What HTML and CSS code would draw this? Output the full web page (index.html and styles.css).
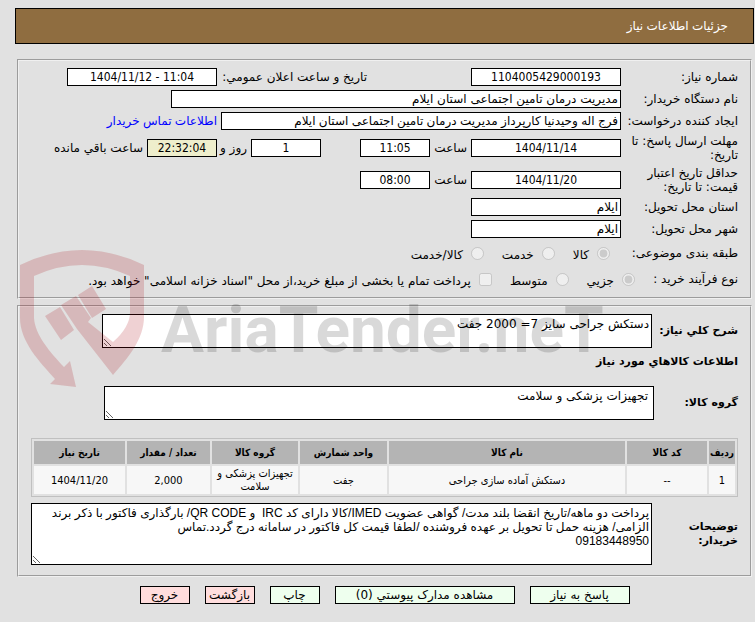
FILE: index.html
```html
<!DOCTYPE html>
<html lang="fa" dir="rtl">
<head>
    <meta charset="UTF-8">
    <meta name="viewport" content="width=device-width, initial-scale=1.0">
    <title>جزئیات اطلاعات نیاز</title>
    <link rel="stylesheet" href="styles.css">
</head>
<body>
    <header class="page-title">جزئیات اطلاعات نیاز</header>

    <main>
        <section class="panel">
            <div class="row">
                <label class="caption" for="needNo">شماره نیاز:</label>
                <input class="num medium" type="text" id="needNo" value="1104005429000193" readonly>
                <label class="announce" for="announceDate">تاریخ و ساعت اعلان عمومي:</label>
                <input class="num medium" type="text" id="announceDate" value="1404/11/12 - 11:04" dir="ltr" readonly>
            </div>
            <div class="row">
                <label class="caption" for="buyer">نام دستگاه خریدار:</label>
                <input class="wide" type="text" id="buyer" value="مدیریت درمان تامین اجتماعی استان ایلام" readonly>
            </div>
            <div class="row">
                <label class="caption" for="creator">ایجاد کننده درخواست:</label>
                <input class="creator" type="text" id="creator" value="فرج اله وحیدنیا کارپرداز مدیریت درمان تامین اجتماعی استان ایلام" readonly>
                <a href="#">اطلاعات تماس خریدار</a>
            </div>
            <div class="row">
                <label class="caption" for="replyDate">مهلت ارسال پاسخ: تا تاریخ:</label>
                <input class="num medium" type="text" id="replyDate" value="1404/11/14" readonly>
                <label class="hour" for="replyHour">ساعت</label>
                <input class="num short" type="text" id="replyHour" value="11:05" readonly>
                <input class="num short days" type="text" id="days" value="1" readonly>
                <label class="and" for="days">روز و</label>
                <input class="num short remaining" type="text" id="remaining" value="22:32:04" readonly>
                <label for="remaining">ساعت باقي مانده</label>
            </div>
            <div class="row">
                <label class="caption" for="priceDate">حداقل تاریخ اعتبار قیمت: تا تاریخ:</label>
                <input class="num medium" type="text" id="priceDate" value="1404/11/20" readonly>
                <label class="hour" for="priceHour">ساعت</label>
                <input class="num short" type="text" id="priceHour" value="08:00" readonly>
            </div>
            <div class="row">
                <label class="caption" for="province">استان محل تحویل:</label>
                <input class="medium" type="text" id="province" value="ایلام" readonly>
            </div>
            <div class="row">
                <label class="caption" for="city">شهر محل تحویل:</label>
                <input class="medium" type="text" id="city" value="ایلام" readonly>
            </div>
            <div class="row options">
                <span class="caption">طبقه بندی موضوعی:</span>
                <label class="option"><input type="radio" name="subject" checked disabled><span>کالا</span></label>
                <label class="option"><input type="radio" name="subject" disabled><span>خدمت</span></label>
                <label class="option"><input type="radio" name="subject" disabled><span>کالا/خدمت</span></label>
            </div>
            <div class="row options process">
                <span class="caption">نوع فرآیند خرید :</span>
                <label class="option"><input type="radio" name="process" checked disabled><span>جزیي</span></label>
                <label class="option"><input type="radio" name="process" disabled><span>متوسط</span></label>
                <label class="option"><input type="checkbox" disabled><span>پرداخت تمام یا بخشی از مبلغ خرید،از محل "اسناد خزانه اسلامی" خواهد بود.</span></label>
            </div>
        </section>

        <section class="panel goods">
            <div class="row summary">
                <label class="heading" for="summary">شرح کلي نیاز:</label>
                <textarea id="summary" readonly>دستکش جراحی سایز 7= 2000 جفت</textarea>
            </div>
            <h2 class="heading">اطلاعات کالاهاي مورد نیاز</h2>
            <div class="row group">
                <label class="heading" for="group">گروه کالا:</label>
                <textarea id="group" readonly>تجهیزات پزشکی و سلامت</textarea>
            </div>

            <table class="items">
                <colgroup>
                    <col class="col-row"><col class="col-code"><col><col class="col-unit">
                    <col class="col-group"><col class="col-count"><col class="col-date">
                </colgroup>
                <thead>
                    <tr>
                        <th>ردیف</th>
                        <th>کد کالا</th>
                        <th>نام کالا</th>
                        <th>واحد شمارش</th>
                        <th>گروه کالا</th>
                        <th>تعداد / مقدار</th>
                        <th>تاریخ نیاز</th>
                    </tr>
                </thead>
                <tbody>
                    <tr>
                        <td>1</td>
                        <td>--</td>
                        <td>دستکش آماده سازی جراحی</td>
                        <td>جفت</td>
                        <td>تجهیزات پزشکی و سلامت</td>
                        <td>2,000</td>
                        <td>1404/11/20</td>
                    </tr>
                </tbody>
            </table>

            <div class="row notes">
                <label class="heading" for="notes">توضیحات خریدار:</label>
                <textarea id="notes" readonly>پرداخت دو ماهه/تاریخ انقضا بلند مدت/ گواهی عضویت IMED/کالا دارای کد IRC  و QR CODE/ بارگذاری فاکتور با ذکر برند
الزامی/ هزینه حمل تا تحویل بر عهده فروشنده /لطفا قیمت کل فاکتور در سامانه درج گردد.تماس
09183448950</textarea>
            </div>
        </section>

        <div class="actions">
            <button class="btn large" type="button">پاسخ به نیاز</button>
            <button class="btn xlarge" type="button">مشاهده مدارک پیوستي (0)</button>
            <button class="btn" type="button">چاپ</button>
            <button class="btn back" type="button">بازگشت</button>
            <button class="btn back" type="button">خروج</button>
        </div>
    </main>

    <div class="watermark" dir="ltr">
        <svg width="126" height="140" viewBox="19 249 126 140" aria-hidden="true">
            <path d="M20 265Q82 235 144 265V317C144 339 128 358 113 375L77 329L61 305L76 296L91 318L88 322L113 342Q130 327 130 312V276Q82 254 34 276V318C35 335 50 352 64 367L70 361L76 387L50 384L55 379C40 362 20 342 20 318Z"/>
            <path d="M45 316L60 307L74 330L61 340ZM78 295L92 286L106 309L92 318Z"/>
        </svg>
        <span>AriaTender.neT</span>
    </div>
</body>
</html>
```
FILE: styles.css
```css
:root {
    --page-bg: #e1e1e1;
    --title-bg: #8f6d40;
    --ok-bg: #eeffee;
    --back-bg: #ffdddd;
}

* {
    box-sizing: border-box;
}

body {
    position: relative;
    margin: 8px 1px 8px 15px;
    background: var(--page-bg);
    color: #000;
    font: 12px/14px "DejaVu Sans", sans-serif;
}

.page-title {
    margin-bottom: 15px;
    padding: 10px 25px;
    border: 1px solid #000;
    background: var(--title-bg);
    color: #fff;
    font-size: 12px;
}

main {
    padding: 0 2px;
}

.panel {
    display: flex;
    flex-direction: column;
    gap: 4px;
    margin-bottom: 6px;
    padding: 7px 12px 7px 12px;
    border: 2px groove #f0f0f0;
}

.row {
    display: flex;
    align-items: center;
    gap: 4px;
}

.caption {
    flex: none;
    width: 113px;
}

input[type="text"],
textarea {
    border: 1px solid #000;
    border-radius: 0;
    background: #fff;
    color: #000;
    font: 12px/14px "DejaVu Sans", sans-serif;
    outline: none;
}

input[type="text"] {
    height: 18px;
    padding: 0 2px;
}

input.num {
    text-align: center;
    font-family: "DejaVu Sans Condensed", sans-serif;
}

input.medium {
    width: 150px;
}

input.short {
    width: 70px;
}

input.wide {
    width: 450px;
}

input.creator {
    width: 400px;
}

input.remaining {
    background: #eeeecc;
}

input.days {
    margin-right: 35px;
}

.announce {
    width: 146px;
    margin-right: 100px;
    white-space: nowrap;
}

.hour {
    width: 33px;
}

.and {
    width: 26px;
    white-space: nowrap;
}

a {
    color: #0000ff;
    text-decoration: none;
}

.page-title,
a,
input.creator,
.notes textarea {
    font-family: "Liberation Sans", "DejaVu Sans", sans-serif;
}

.options {
    height: 22px;
    gap: 18px;
}

.options .caption {
    width: 110px;
    white-space: nowrap;
}

.process .caption {
    width: 85px;
}

.option {
    display: flex;
    align-items: center;
    gap: 8px;
}

.option input {
    margin: 0;
}

.option span {
    padding-top: 4px;
}

.goods {
    gap: 0;
    padding-bottom: 10px;
}

.heading {
    flex: none;
    width: 82px;
    margin: 0;
    font-size: 11px;
    line-height: 14px;
    font-weight: bold;
}

h2.heading {
    width: auto;
    margin: 7px 0 17px;
}

textarea {
    flex: 1;
    min-width: 0;
    height: 34px;
    padding: 2px;
}

.summary {
    padding-left: 71px;
}

.group {
    padding-left: 73px;
}

.group .heading {
    width: 80px;
}

.group textarea {
    padding: 2px 5px;
}

.notes textarea {
    height: 62px;
}

.items {
    width: 100%;
    margin: 18px 0 6px;
    border: 1px solid #c0c0c0;
    border-spacing: 2px;
    table-layout: fixed;
    text-align: center;
    font: 11px/13px "DejaVu Sans Condensed", sans-serif;
}

.items th {
    height: 23px;
    padding: 0;
    background: #b4b4b4;
    font-size: 10px;
}

.items td {
    height: 28px;
    padding: 1px 0;
    background: #f7f7f7;
}

.col-row {
    width: 26px;
}

.col-code {
    width: 80px;
}

.col-unit {
    width: 87px;
}

.col-group {
    width: 86px;
}

.col-count {
    width: 83px;
}

.col-date {
    width: 91px;
}

.actions {
    display: flex;
    justify-content: center;
    gap: 15px;
    padding-top: 3px;
}

.btn {
    width: 50px;
    height: 18px;
    padding: 0;
    border: 1px solid #000;
    background: var(--ok-bg);
    color: #000;
    font: 12px/14px "DejaVu Sans", sans-serif;
    white-space: nowrap;
    cursor: pointer;
}

.btn.large {
    width: 100px;
}

.btn.xlarge {
    width: 180px;
}

.btn.back {
    background: var(--back-bg);
}

/* brand mark printed across both panels */
.watermark {
    position: absolute;
    top: 241px;
    left: 4px;
    display: flex;
    align-items: flex-start;
    gap: 16px;
    color: rgba(0, 0, 0, 0.15);
    font: bold 64px/72px "Roboto", sans-serif;
    pointer-events: none;
}

.watermark svg {
    fill: rgba(165, 0, 10, 0.18);
}

.watermark span {
    padding-top: 46px;
}
```
